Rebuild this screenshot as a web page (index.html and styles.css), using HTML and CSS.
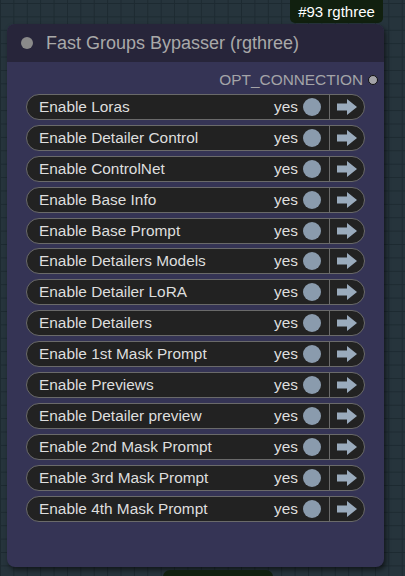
FILE: index.html
```html
<!DOCTYPE html>
<html>
<head>
<meta charset="utf-8">
<link rel="stylesheet" href="styles.css">
</head>
<body>
<div class="canvas">
  <div class="badge">#93 rgthree</div>
  <div class="node">
    <div class="title">
      <span class="title-dot"></span>
      <span class="title-text">Fast Groups Bypasser (rgthree)</span>
    </div>
    <div class="body">
      <div class="output">
        <span class="output-label">OPT_CONNECTION</span>
        <span class="slot"></span>
      </div>
      <div class="rows">
        <div class="row"><span class="label">Enable Loras</span><span class="val">yes</span><span class="toggle"></span><span class="go"><svg viewBox="0 0 22 18" width="22" height="18"><path d="M1 5.5h10V1l10 8-10 8v-4.5H1z"/></svg></span></div>
        <div class="row"><span class="label">Enable Detailer Control</span><span class="val">yes</span><span class="toggle"></span><span class="go"><svg viewBox="0 0 22 18" width="22" height="18"><path d="M1 5.5h10V1l10 8-10 8v-4.5H1z"/></svg></span></div>
        <div class="row"><span class="label">Enable ControlNet</span><span class="val">yes</span><span class="toggle"></span><span class="go"><svg viewBox="0 0 22 18" width="22" height="18"><path d="M1 5.5h10V1l10 8-10 8v-4.5H1z"/></svg></span></div>
        <div class="row"><span class="label">Enable Base Info</span><span class="val">yes</span><span class="toggle"></span><span class="go"><svg viewBox="0 0 22 18" width="22" height="18"><path d="M1 5.5h10V1l10 8-10 8v-4.5H1z"/></svg></span></div>
        <div class="row"><span class="label">Enable Base Prompt</span><span class="val">yes</span><span class="toggle"></span><span class="go"><svg viewBox="0 0 22 18" width="22" height="18"><path d="M1 5.5h10V1l10 8-10 8v-4.5H1z"/></svg></span></div>
        <div class="row"><span class="label">Enable Detailers Models</span><span class="val">yes</span><span class="toggle"></span><span class="go"><svg viewBox="0 0 22 18" width="22" height="18"><path d="M1 5.5h10V1l10 8-10 8v-4.5H1z"/></svg></span></div>
        <div class="row"><span class="label">Enable Detailer LoRA</span><span class="val">yes</span><span class="toggle"></span><span class="go"><svg viewBox="0 0 22 18" width="22" height="18"><path d="M1 5.5h10V1l10 8-10 8v-4.5H1z"/></svg></span></div>
        <div class="row"><span class="label">Enable Detailers</span><span class="val">yes</span><span class="toggle"></span><span class="go"><svg viewBox="0 0 22 18" width="22" height="18"><path d="M1 5.5h10V1l10 8-10 8v-4.5H1z"/></svg></span></div>
        <div class="row"><span class="label">Enable 1st Mask Prompt</span><span class="val">yes</span><span class="toggle"></span><span class="go"><svg viewBox="0 0 22 18" width="22" height="18"><path d="M1 5.5h10V1l10 8-10 8v-4.5H1z"/></svg></span></div>
        <div class="row"><span class="label">Enable Previews</span><span class="val">yes</span><span class="toggle"></span><span class="go"><svg viewBox="0 0 22 18" width="22" height="18"><path d="M1 5.5h10V1l10 8-10 8v-4.5H1z"/></svg></span></div>
        <div class="row"><span class="label">Enable Detailer preview</span><span class="val">yes</span><span class="toggle"></span><span class="go"><svg viewBox="0 0 22 18" width="22" height="18"><path d="M1 5.5h10V1l10 8-10 8v-4.5H1z"/></svg></span></div>
        <div class="row"><span class="label">Enable 2nd Mask Prompt</span><span class="val">yes</span><span class="toggle"></span><span class="go"><svg viewBox="0 0 22 18" width="22" height="18"><path d="M1 5.5h10V1l10 8-10 8v-4.5H1z"/></svg></span></div>
        <div class="row"><span class="label">Enable 3rd Mask Prompt</span><span class="val">yes</span><span class="toggle"></span><span class="go"><svg viewBox="0 0 22 18" width="22" height="18"><path d="M1 5.5h10V1l10 8-10 8v-4.5H1z"/></svg></span></div>
        <div class="row"><span class="label">Enable 4th Mask Prompt</span><span class="val">yes</span><span class="toggle"></span><span class="go"><svg viewBox="0 0 22 18" width="22" height="18"><path d="M1 5.5h10V1l10 8-10 8v-4.5H1z"/></svg></span></div>
      </div>
    </div>
  </div>
  <div class="next-node"></div>
</div>
</body>
</html>
```

FILE: styles.css
```css
html, body {
  margin: 0;
  padding: 0;
}
body {
  width: 405px;
  height: 576px;
  overflow: hidden;
  font-family: "Liberation Sans", Arial, sans-serif;
  background-color: #26343c;
  background-image:
    linear-gradient(to right, #1d2a31 1px, transparent 1px),
    linear-gradient(to bottom, #1d2a31 1px, transparent 1px);
  background-size: 13.4px 13.4px;
  background-position: 0 3px;
}
.canvas {
  position: relative;
  width: 405px;
  height: 576px;
}
.badge {
  position: absolute;
  left: 290px;
  top: -6px;
  width: 93px;
  height: 29px;
  padding-top: 6px;
  box-sizing: border-box;
  background: #11200f;
  border-radius: 5px;
  color: #fff;
  font-size: 15px;
  line-height: 23px;
  text-align: center;
}
.node {
  position: absolute;
  left: 7px;
  top: 24px;
  width: 377px;
  height: 543px;
  border-radius: 8px;
  overflow: hidden;
  background: #353455;
  box-shadow: 2px 3px 5px rgba(0,0,0,0.55);
  display: flex;
  flex-direction: column;
}
.title {
  height: 38px;
  background: #27253a;
  display: flex;
  align-items: center;
  flex-shrink: 0;
}
.title-dot {
  width: 12px;
  height: 12px;
  border-radius: 50%;
  background: #8a8a8a;
  margin-left: 14px;
  margin-right: 13px;
}
.title-text {
  color: #a9a9a9;
  font-size: 18px;
}
.body {
  display: flex;
  flex-direction: column;
  padding: 9px 0 0 19px;
}
.output {
  display: flex;
  align-items: center;
  justify-content: flex-end;
  height: 18px;
  padding-right: 6px;
}
.output-label {
  color: #a4a4a8;
  font-size: 15.4px;
  margin-right: 5px;
}
.slot {
  width: 8px;
  height: 8px;
  border-radius: 50%;
  background: #a3a3a8;
  border: 1px solid #111;
}
.rows {
  display: flex;
  flex-direction: column;
  gap: 4.9px;
  margin-top: 5px;
}
.row {
  width: 339px;
  height: 26px;
  box-sizing: border-box;
  border: 1px solid #6a6a6a;
  border-radius: 13px;
  background: #222222;
  display: flex;
  align-items: center;
  color: #dedede;
  font-size: 15.4px;
}
.label {
  flex: 1;
  padding-left: 12px;
}
.val {
  margin-right: 5px;
}
.toggle {
  width: 18px;
  height: 18px;
  border-radius: 50%;
  background: #8a9bad;
  margin-right: 8px;
}
.go {
  align-self: stretch;
  width: 35px;
  border-left: 1px solid #6a6a6a;
  display: flex;
  align-items: center;
  padding-left: 6px;
  box-sizing: border-box;
}
.go svg {
  fill: #9aabbd;
}
.next-node {
  position: absolute;
  left: 163px;
  top: 570px;
  width: 110px;
  height: 20px;
  background: #10200f;
  border-radius: 7px;
}
```
